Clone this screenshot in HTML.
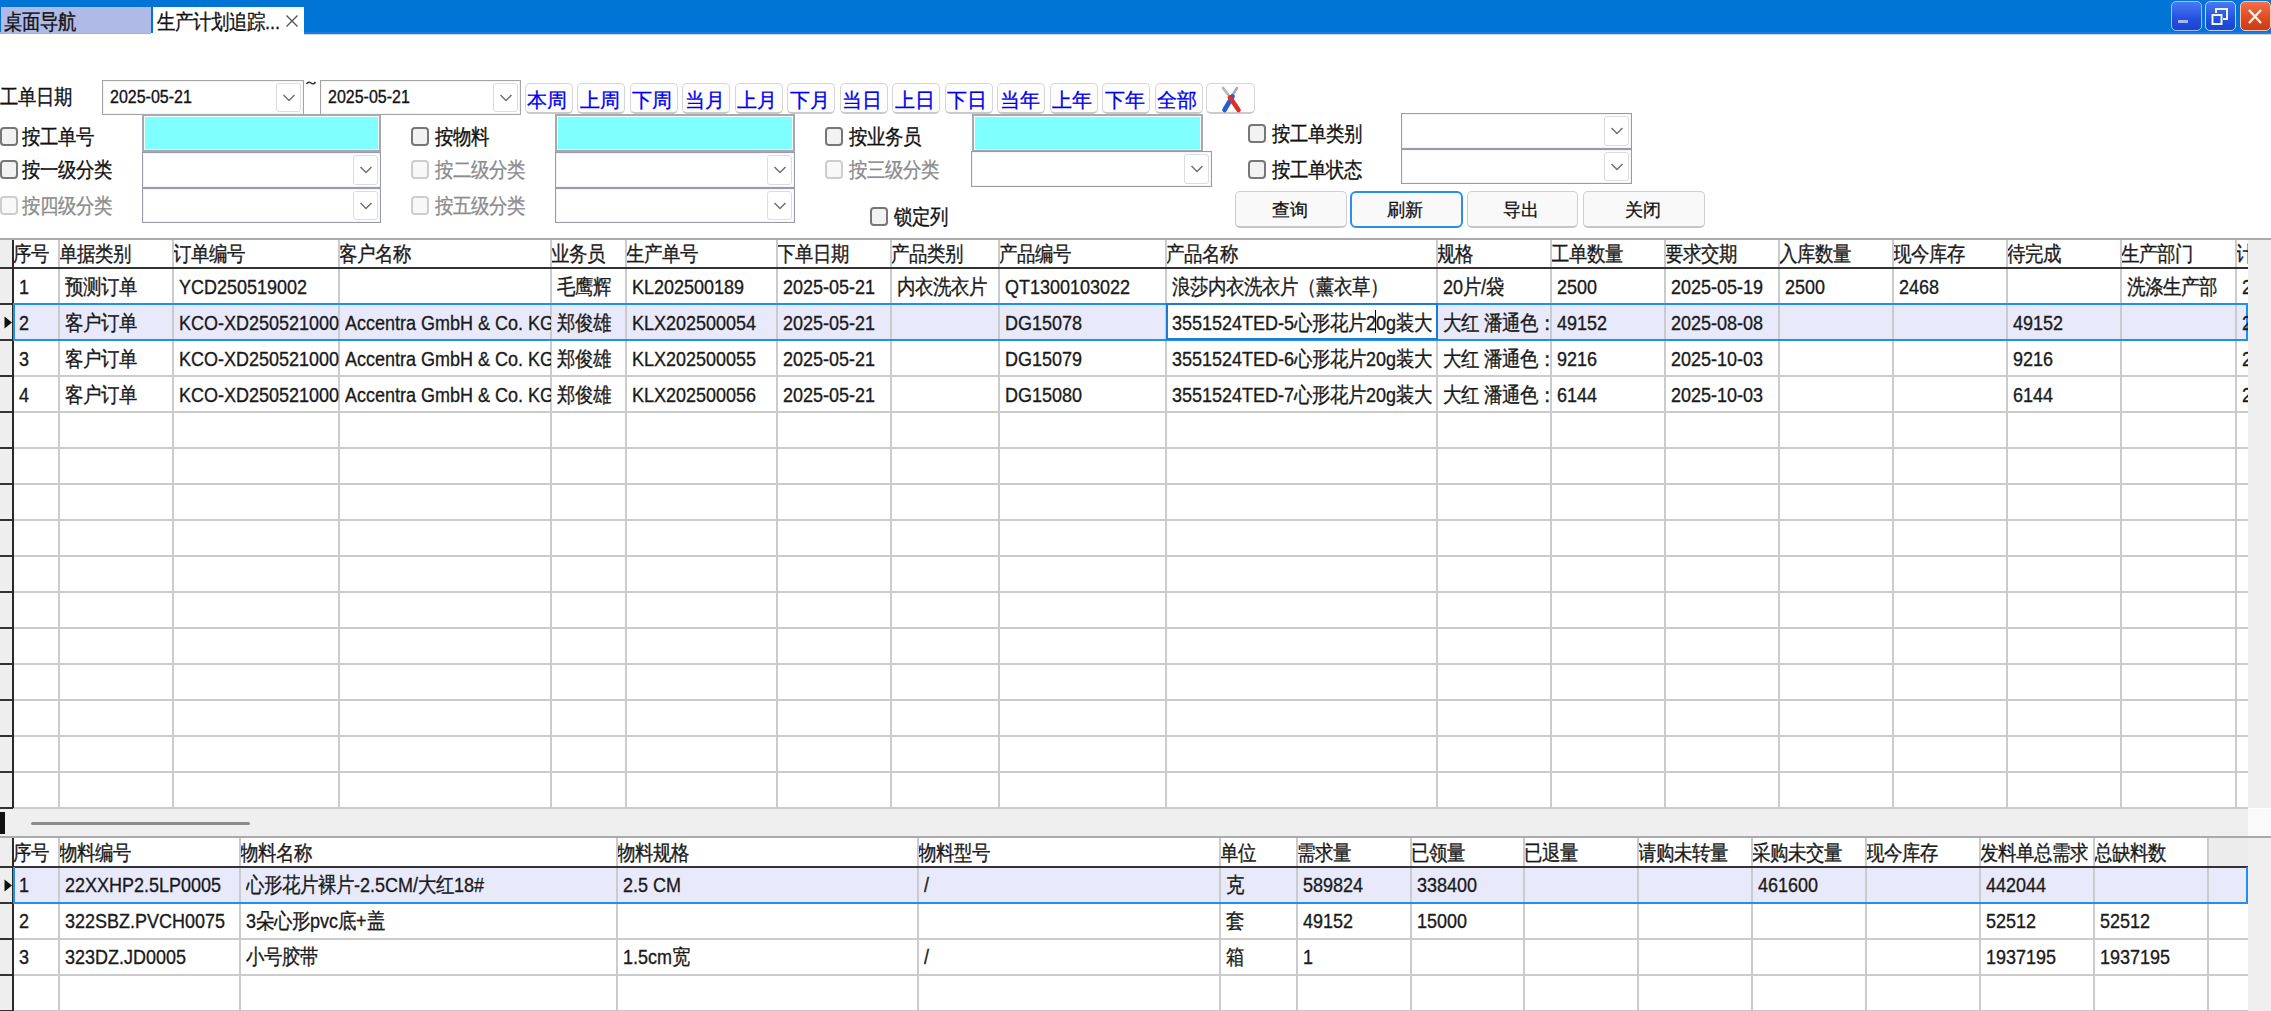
<!DOCTYPE html><html><head><meta charset="utf-8"><style>
*{box-sizing:border-box;margin:0;padding:0}
html,body{width:2271px;height:1011px;overflow:hidden;background:#fff;font-family:'Liberation Sans',sans-serif;font-size:18px;color:#000}
.ab{position:absolute;white-space:nowrap}
.t{position:absolute;white-space:nowrap;line-height:20px;-webkit-text-stroke:0.3px currentColor;transform:scaleY(1.14);transform-origin:50% 55%}
.btn{position:absolute;border:1px solid #d6d6d6;border-bottom:2px solid #cacaca;border-radius:5px;background:#fdfdfd;color:#0000f0;text-align:center;line-height:31px;font-size:20px;-webkit-text-stroke:0.3px #0000f0}
.cb{position:absolute;width:18px;height:19px;border:2px solid #777;border-radius:4px;background:#f2f2f2}
.cbd{border-color:#cdcdcd;background:#f8f8f8}
.cyan{position:absolute;background:#80ffff;border:2px solid #a6aaae;box-shadow:inset 0 0 0 1px #f4fefe}
.combo{position:absolute;background:#fff;border:1px solid #9a9aae;box-shadow:inset 0 0 0 1px #f4f4f8}
.dd{position:absolute;top:2px;right:2px;width:25px;bottom:2px;border:1px solid #dcdcdc;border-radius:3px;background:#fff}
.dd svg{position:absolute;left:5px;top:50%;margin-top:-5px}
.gl{position:absolute;background:#cbcbcb}
.abtn{position:absolute;border:1px solid #cfcfcf;border-bottom:2px solid #c6c6c6;border-radius:5px;background:#f9f9f9;text-align:center;line-height:36px;padding-right:3px;color:#111;-webkit-text-stroke:0.3px #111}
</style></head><body>

<div class="ab" style="left:0;top:0;width:2271px;height:33px;background:#0075d6"></div>
<div class="ab" style="left:304px;top:32px;width:1967px;height:1px;background:#0a7ef0"></div>
<div class="ab" style="left:304px;top:33px;width:1967px;height:1px;background:#7a6a60"></div>
<div class="ab" style="left:304px;top:34px;width:1967px;height:1px;background:#d8cfc8"></div>
<div class="ab" style="left:0;top:32px;width:151px;height:2px;background:#a6aed8"></div>
<div class="ab" style="left:1px;top:7px;width:150px;height:26px;background:#b0bae6"></div>
<div class="t" style="left:4px;top:12px;color:#111">桌面导航</div>
<div class="ab" style="left:153px;top:7px;width:151px;height:27px;background:#fff"></div>
<div class="t" style="left:157px;top:12px;color:#111">生产计划追踪...</div>
<svg class="ab" style="left:285px;top:14px" width="14" height="14"><path d="M1.5 1.5L12.5 12.5M12.5 1.5L1.5 12.5" stroke="#555" stroke-width="1.4"/></svg>
<div class="ab" style="left:2171px;top:1px;width:31px;height:30px;border-radius:5px;background:linear-gradient(#4a7af2,#2350e0 60%,#1a44d0);border:1.5px solid #9cc0ff"></div>
<div class="ab" style="left:2178px;top:20px;width:10px;height:3px;background:#a8b4f4"></div>
<div class="ab" style="left:2205px;top:1px;width:31px;height:30px;border-radius:5px;background:linear-gradient(#4a7af2,#2350e0 60%,#1a44d0);border:1.5px solid #b8d4ff"></div>
<svg class="ab" style="left:2210px;top:6px" width="20" height="20"><rect x="2.5" y="9" width="9" height="9" fill="none" stroke="#eef4e0" stroke-width="2"/><path d="M6 7V3H17V13H13" fill="none" stroke="#eef4e0" stroke-width="2"/></svg>
<div class="ab" style="left:2240px;top:1px;width:31px;height:30px;border-radius:5px;background:linear-gradient(#f27048,#dc4a20 60%,#c83c18);border:1.5px solid #f8c8b8"></div>
<svg class="ab" style="left:2244px;top:6px" width="22" height="20"><path d="M5 4L17 17M17 4L5 17" stroke="#f4f4e4" stroke-width="2.4"/></svg>
<div class="t" style="left:0;top:87px;color:#111">工单日期</div>
<div class="combo" style="left:102px;top:80px;width:202px;height:35px;border-color:#a4a4a4"><div class="dd"><svg width="14" height="10"><path d="M1.5 2L7 7.5L12.5 2" fill="none" stroke="#707070" stroke-width="1.5"/></svg></div></div>
<div class="t" style="left:110px;top:87px;font-size:16px;color:#111">2025-05-21</div>
<div class="combo" style="left:320px;top:80px;width:201px;height:35px;border-color:#a4a4a4"><div class="dd"><svg width="14" height="10"><path d="M1.5 2L7 7.5L12.5 2" fill="none" stroke="#707070" stroke-width="1.5"/></svg></div></div>
<div class="t" style="left:328px;top:87px;font-size:16px;color:#111">2025-05-21</div>
<svg class="ab" style="left:304px;top:78px" width="14" height="10"><path d="M2.5 6Q4.5 3 7 5Q9.5 7 11.5 4" fill="none" stroke="#333" stroke-width="1.6"/></svg>
<div class="btn" style="left:524.5px;top:83px;width:48px;height:31px;padding:1px 3px 0 0">本周</div>
<div class="btn" style="left:577.0px;top:83px;width:48px;height:31px;padding:1px 3px 0 0">上周</div>
<div class="btn" style="left:629.5px;top:83px;width:48px;height:31px;padding:1px 3px 0 0">下周</div>
<div class="btn" style="left:682.0px;top:83px;width:48px;height:31px;padding:1px 3px 0 0">当月</div>
<div class="btn" style="left:734.5px;top:83px;width:48px;height:31px;padding:1px 3px 0 0">上月</div>
<div class="btn" style="left:787.0px;top:83px;width:48px;height:31px;padding:1px 3px 0 0">下月</div>
<div class="btn" style="left:839.5px;top:83px;width:48px;height:31px;padding:1px 3px 0 0">当日</div>
<div class="btn" style="left:892.0px;top:83px;width:48px;height:31px;padding:1px 3px 0 0">上日</div>
<div class="btn" style="left:944.5px;top:83px;width:48px;height:31px;padding:1px 3px 0 0">下日</div>
<div class="btn" style="left:997.0px;top:83px;width:48px;height:31px;padding:1px 3px 0 0">当年</div>
<div class="btn" style="left:1049.5px;top:83px;width:48px;height:31px;padding:1px 3px 0 0">上年</div>
<div class="btn" style="left:1102.0px;top:83px;width:48px;height:31px;padding:1px 3px 0 0">下年</div>
<div class="btn" style="left:1154.5px;top:83px;width:48px;height:31px;padding:1px 3px 0 0">全部</div>
<div class="btn" style="left:1206px;top:83px;width:49px;height:31px"></div>
<svg class="ab" style="left:1206px;top:83px" width="49" height="31"><path d="M17 5L24 14" stroke="#b4b4b4" stroke-width="2.6" stroke-linecap="round"/><path d="M31 5L26 13" stroke="#a8aab4" stroke-width="2.6" stroke-linecap="round"/><path d="M26.5 13.5L18.5 27" stroke="#1f5fd0" stroke-width="4.6" stroke-linecap="round"/><path d="M24 14.5L32.5 27" stroke="#dc2f2a" stroke-width="4.6" stroke-linecap="round"/></svg>
<div class="cb" style="left:0px;top:127px"></div>
<div class="t" style="left:22px;top:127px;color:#111">按工单号</div>
<div class="cyan" style="left:142px;top:114px;width:239px;height:38px"></div>
<div class="cb" style="left:411px;top:127px"></div>
<div class="t" style="left:435px;top:127px;color:#111">按物料</div>
<div class="cyan" style="left:555px;top:114px;width:240px;height:38px"></div>
<div class="cb" style="left:825px;top:127px"></div>
<div class="t" style="left:849px;top:127px;color:#111">按业务员</div>
<div class="cyan" style="left:972px;top:114px;width:231px;height:38px"></div>
<div class="cb" style="left:1248px;top:124px"></div>
<div class="t" style="left:1272px;top:124px;color:#111">按工单类别</div>
<div class="combo" style="left:1401px;top:113px;width:231px;height:36px"><div class="dd"><svg width="14" height="10"><path d="M1.5 2L7 7.5L12.5 2" fill="none" stroke="#707070" stroke-width="1.5"/></svg></div></div>
<div class="cb" style="left:1248px;top:160px"></div>
<div class="t" style="left:1272px;top:160px;color:#111">按工单状态</div>
<div class="combo" style="left:1401px;top:149px;width:231px;height:35px"><div class="dd"><svg width="14" height="10"><path d="M1.5 2L7 7.5L12.5 2" fill="none" stroke="#707070" stroke-width="1.5"/></svg></div></div>
<div class="cb" style="left:0px;top:160px"></div>
<div class="t" style="left:22px;top:160px;color:#111">按一级分类</div>
<div class="combo" style="left:142px;top:152px;width:239px;height:36px"><div class="dd"><svg width="14" height="10"><path d="M1.5 2L7 7.5L12.5 2" fill="none" stroke="#707070" stroke-width="1.5"/></svg></div></div>
<div class="cb cbd" style="left:411px;top:160px"></div>
<div class="t" style="left:435px;top:160px;color:#8c8c8c">按二级分类</div>
<div class="combo" style="left:555px;top:152px;width:240px;height:36px"><div class="dd"><svg width="14" height="10"><path d="M1.5 2L7 7.5L12.5 2" fill="none" stroke="#707070" stroke-width="1.5"/></svg></div></div>
<div class="cb cbd" style="left:825px;top:160px"></div>
<div class="t" style="left:849px;top:160px;color:#8c8c8c">按三级分类</div>
<div class="combo" style="left:971px;top:151px;width:241px;height:36px"><div class="dd"><svg width="14" height="10"><path d="M1.5 2L7 7.5L12.5 2" fill="none" stroke="#707070" stroke-width="1.5"/></svg></div></div>
<div class="cb cbd" style="left:0px;top:196px"></div>
<div class="t" style="left:22px;top:196px;color:#8c8c8c">按四级分类</div>
<div class="combo" style="left:142px;top:188px;width:239px;height:35px"><div class="dd"><svg width="14" height="10"><path d="M1.5 2L7 7.5L12.5 2" fill="none" stroke="#707070" stroke-width="1.5"/></svg></div></div>
<div class="cb cbd" style="left:411px;top:196px"></div>
<div class="t" style="left:435px;top:196px;color:#8c8c8c">按五级分类</div>
<div class="combo" style="left:555px;top:188px;width:240px;height:35px"><div class="dd"><svg width="14" height="10"><path d="M1.5 2L7 7.5L12.5 2" fill="none" stroke="#707070" stroke-width="1.5"/></svg></div></div>
<div class="cb" style="left:870px;top:207px"></div>
<div class="t" style="left:894px;top:207px;color:#111">锁定列</div>
<div class="abtn" style="left:1235px;top:191px;width:112px;height:37px;">查询</div>
<div class="abtn" style="left:1350px;top:191px;width:113px;height:37px;border:2px solid #2a8ef0;line-height:34px;border-radius:6px;">刷新</div>
<div class="abtn" style="left:1467px;top:191px;width:111px;height:37px;">导出</div>
<div class="abtn" style="left:1583px;top:191px;width:122px;height:37px;">关闭</div>
<div class="ab" style="left:0;top:238px;width:2271px;height:2px;background:#a9a9ae"></div>
<div class="ab" style="left:2248px;top:240px;width:23px;height:568px;background:#efefef"></div>
<div class="ab" style="left:0;top:240px;width:12px;height:568px;background:#eeeeee"></div>
<div class="t" style="left:13px;top:244px;width:46px;overflow:hidden;color:#1a1a1a">序号</div>
<div class="t" style="left:59px;top:244px;width:114px;overflow:hidden;color:#1a1a1a">单据类别</div>
<div class="t" style="left:173px;top:244px;width:166px;overflow:hidden;color:#1a1a1a">订单编号</div>
<div class="t" style="left:339px;top:244px;width:212px;overflow:hidden;color:#1a1a1a">客户名称</div>
<div class="t" style="left:551px;top:244px;width:75px;overflow:hidden;color:#1a1a1a">业务员</div>
<div class="t" style="left:626px;top:244px;width:151px;overflow:hidden;color:#1a1a1a">生产单号</div>
<div class="t" style="left:777px;top:244px;width:114px;overflow:hidden;color:#1a1a1a">下单日期</div>
<div class="t" style="left:891px;top:244px;width:108px;overflow:hidden;color:#1a1a1a">产品类别</div>
<div class="t" style="left:999px;top:244px;width:167px;overflow:hidden;color:#1a1a1a">产品编号</div>
<div class="t" style="left:1166px;top:244px;width:271px;overflow:hidden;color:#1a1a1a">产品名称</div>
<div class="t" style="left:1437px;top:244px;width:114px;overflow:hidden;color:#1a1a1a">规格</div>
<div class="t" style="left:1551px;top:244px;width:114px;overflow:hidden;color:#1a1a1a">工单数量</div>
<div class="t" style="left:1665px;top:244px;width:114px;overflow:hidden;color:#1a1a1a">要求交期</div>
<div class="t" style="left:1779px;top:244px;width:114px;overflow:hidden;color:#1a1a1a">入库数量</div>
<div class="t" style="left:1893px;top:244px;width:114px;overflow:hidden;color:#1a1a1a">现今库存</div>
<div class="t" style="left:2007px;top:244px;width:114px;overflow:hidden;color:#1a1a1a">待完成</div>
<div class="t" style="left:2121px;top:244px;width:115px;overflow:hidden;color:#1a1a1a">生产部门</div>
<div class="t" style="left:2236px;top:244px;width:12px;overflow:hidden;color:#1a1a1a">计划</div>
<div class="gl" style="left:13px;top:303px;width:2235px;height:2px"></div>
<div class="ab" style="left:0;top:303px;width:13px;height:2px;background:#333"></div>
<div class="gl" style="left:13px;top:339px;width:2235px;height:2px"></div>
<div class="ab" style="left:0;top:339px;width:13px;height:2px;background:#333"></div>
<div class="gl" style="left:13px;top:375px;width:2235px;height:2px"></div>
<div class="ab" style="left:0;top:375px;width:13px;height:2px;background:#333"></div>
<div class="gl" style="left:13px;top:411px;width:2235px;height:2px"></div>
<div class="ab" style="left:0;top:411px;width:13px;height:2px;background:#333"></div>
<div class="gl" style="left:13px;top:447px;width:2235px;height:2px"></div>
<div class="ab" style="left:0;top:447px;width:13px;height:2px;background:#333"></div>
<div class="gl" style="left:13px;top:483px;width:2235px;height:2px"></div>
<div class="ab" style="left:0;top:483px;width:13px;height:2px;background:#333"></div>
<div class="gl" style="left:13px;top:519px;width:2235px;height:2px"></div>
<div class="ab" style="left:0;top:519px;width:13px;height:2px;background:#333"></div>
<div class="gl" style="left:13px;top:555px;width:2235px;height:2px"></div>
<div class="ab" style="left:0;top:555px;width:13px;height:2px;background:#333"></div>
<div class="gl" style="left:13px;top:591px;width:2235px;height:2px"></div>
<div class="ab" style="left:0;top:591px;width:13px;height:2px;background:#333"></div>
<div class="gl" style="left:13px;top:627px;width:2235px;height:2px"></div>
<div class="ab" style="left:0;top:627px;width:13px;height:2px;background:#333"></div>
<div class="gl" style="left:13px;top:663px;width:2235px;height:2px"></div>
<div class="ab" style="left:0;top:663px;width:13px;height:2px;background:#333"></div>
<div class="gl" style="left:13px;top:699px;width:2235px;height:2px"></div>
<div class="ab" style="left:0;top:699px;width:13px;height:2px;background:#333"></div>
<div class="gl" style="left:13px;top:735px;width:2235px;height:2px"></div>
<div class="ab" style="left:0;top:735px;width:13px;height:2px;background:#333"></div>
<div class="gl" style="left:13px;top:771px;width:2235px;height:2px"></div>
<div class="ab" style="left:0;top:771px;width:13px;height:2px;background:#333"></div>
<div class="gl" style="left:13px;top:807px;width:2235px;height:2px"></div>
<div class="ab" style="left:0;top:807px;width:13px;height:2px;background:#333"></div>
<div class="ab" style="left:13px;top:304px;width:2235px;height:36px;background:#e8eafb"></div>
<div class="gl" style="left:58px;top:240px;width:2px;height:568px"></div>
<div class="gl" style="left:172px;top:240px;width:2px;height:568px"></div>
<div class="gl" style="left:338px;top:240px;width:2px;height:568px"></div>
<div class="gl" style="left:550px;top:240px;width:2px;height:568px"></div>
<div class="gl" style="left:625px;top:240px;width:2px;height:568px"></div>
<div class="gl" style="left:776px;top:240px;width:2px;height:568px"></div>
<div class="gl" style="left:890px;top:240px;width:2px;height:568px"></div>
<div class="gl" style="left:998px;top:240px;width:2px;height:568px"></div>
<div class="gl" style="left:1165px;top:240px;width:2px;height:568px"></div>
<div class="gl" style="left:1436px;top:240px;width:2px;height:568px"></div>
<div class="gl" style="left:1550px;top:240px;width:2px;height:568px"></div>
<div class="gl" style="left:1664px;top:240px;width:2px;height:568px"></div>
<div class="gl" style="left:1778px;top:240px;width:2px;height:568px"></div>
<div class="gl" style="left:1892px;top:240px;width:2px;height:568px"></div>
<div class="gl" style="left:2006px;top:240px;width:2px;height:568px"></div>
<div class="gl" style="left:2120px;top:240px;width:2px;height:568px"></div>
<div class="gl" style="left:2235px;top:240px;width:2px;height:568px"></div>
<div class="ab" style="left:0;top:267px;width:2248px;height:2px;background:#333"></div>
<div class="ab" style="left:12px;top:240px;width:2px;height:568px;background:#2a2a2a"></div>
<div class="ab" style="left:13px;top:303px;width:2235px;height:38px;border:2px solid #2090f0;"></div>
<svg class="ab" style="left:4px;top:316px" width="9" height="13"><path d="M0.5 0.5L8 6.5L0.5 12.5Z" fill="#111"/></svg>
<div class="ab" style="left:1166px;top:303px;width:272px;height:37px;background:#fff;border:2px solid #1c7ad8"></div>
<div class="t" style="left:19px;top:277px;width:40px;overflow:hidden;color:#1a1a1a">1</div>
<div class="t" style="left:65px;top:277px;width:108px;overflow:hidden;color:#1a1a1a">预测订单</div>
<div class="t" style="left:179px;top:277px;width:160px;overflow:hidden;color:#1a1a1a">YCD250519002</div>
<div class="t" style="left:557px;top:277px;width:69px;overflow:hidden;color:#1a1a1a">毛鹰辉</div>
<div class="t" style="left:632px;top:277px;width:145px;overflow:hidden;color:#1a1a1a">KL202500189</div>
<div class="t" style="left:783px;top:277px;width:108px;overflow:hidden;color:#1a1a1a">2025-05-21</div>
<div class="t" style="left:897px;top:277px;width:102px;overflow:hidden;color:#1a1a1a">内衣洗衣片</div>
<div class="t" style="left:1005px;top:277px;width:161px;overflow:hidden;color:#1a1a1a">QT1300103022</div>
<div class="t" style="left:1172px;top:277px;width:265px;overflow:hidden;color:#1a1a1a">浪莎内衣洗衣片（薰衣草）</div>
<div class="t" style="left:1443px;top:277px;width:108px;overflow:hidden;color:#1a1a1a">20片/袋</div>
<div class="t" style="left:1557px;top:277px;width:108px;overflow:hidden;color:#1a1a1a">2500</div>
<div class="t" style="left:1671px;top:277px;width:108px;overflow:hidden;color:#1a1a1a">2025-05-19</div>
<div class="t" style="left:1785px;top:277px;width:108px;overflow:hidden;color:#1a1a1a">2500</div>
<div class="t" style="left:1899px;top:277px;width:108px;overflow:hidden;color:#1a1a1a">2468</div>
<div class="t" style="left:2127px;top:277px;width:109px;overflow:hidden;color:#1a1a1a">洗涤生产部</div>
<div class="t" style="left:2242px;top:277px;width:6px;overflow:hidden;color:#1a1a1a">2025</div>
<div class="t" style="left:19px;top:313px;width:40px;overflow:hidden;color:#1a1a1a">2</div>
<div class="t" style="left:65px;top:313px;width:108px;overflow:hidden;color:#1a1a1a">客户订单</div>
<div class="t" style="left:179px;top:313px;width:160px;overflow:hidden;color:#1a1a1a">KCO-XD2505210001</div>
<div class="t" style="left:345px;top:313px;width:206px;overflow:hidden;color:#1a1a1a">Accentra GmbH &amp; Co. KG</div>
<div class="t" style="left:557px;top:313px;width:69px;overflow:hidden;color:#1a1a1a">郑俊雄</div>
<div class="t" style="left:632px;top:313px;width:145px;overflow:hidden;color:#1a1a1a">KLX202500054</div>
<div class="t" style="left:783px;top:313px;width:108px;overflow:hidden;color:#1a1a1a">2025-05-21</div>
<div class="t" style="left:1005px;top:313px;width:161px;overflow:hidden;color:#1a1a1a">DG15078</div>
<div class="t" style="left:1172px;top:313px;width:265px;overflow:hidden;color:#1a1a1a">3551524TED-5心形花片20g装大</div>
<div class="t" style="left:1443px;top:313px;width:108px;overflow:hidden;color:#1a1a1a">大红 潘通色：</div>
<div class="t" style="left:1557px;top:313px;width:108px;overflow:hidden;color:#1a1a1a">49152</div>
<div class="t" style="left:1671px;top:313px;width:108px;overflow:hidden;color:#1a1a1a">2025-08-08</div>
<div class="t" style="left:2013px;top:313px;width:108px;overflow:hidden;color:#1a1a1a">49152</div>
<div class="t" style="left:2242px;top:313px;width:6px;overflow:hidden;color:#1a1a1a">2025</div>
<div class="t" style="left:19px;top:349px;width:40px;overflow:hidden;color:#1a1a1a">3</div>
<div class="t" style="left:65px;top:349px;width:108px;overflow:hidden;color:#1a1a1a">客户订单</div>
<div class="t" style="left:179px;top:349px;width:160px;overflow:hidden;color:#1a1a1a">KCO-XD2505210002</div>
<div class="t" style="left:345px;top:349px;width:206px;overflow:hidden;color:#1a1a1a">Accentra GmbH &amp; Co. KG</div>
<div class="t" style="left:557px;top:349px;width:69px;overflow:hidden;color:#1a1a1a">郑俊雄</div>
<div class="t" style="left:632px;top:349px;width:145px;overflow:hidden;color:#1a1a1a">KLX202500055</div>
<div class="t" style="left:783px;top:349px;width:108px;overflow:hidden;color:#1a1a1a">2025-05-21</div>
<div class="t" style="left:1005px;top:349px;width:161px;overflow:hidden;color:#1a1a1a">DG15079</div>
<div class="t" style="left:1172px;top:349px;width:265px;overflow:hidden;color:#1a1a1a">3551524TED-6心形花片20g装大</div>
<div class="t" style="left:1443px;top:349px;width:108px;overflow:hidden;color:#1a1a1a">大红 潘通色：</div>
<div class="t" style="left:1557px;top:349px;width:108px;overflow:hidden;color:#1a1a1a">9216</div>
<div class="t" style="left:1671px;top:349px;width:108px;overflow:hidden;color:#1a1a1a">2025-10-03</div>
<div class="t" style="left:2013px;top:349px;width:108px;overflow:hidden;color:#1a1a1a">9216</div>
<div class="t" style="left:2242px;top:349px;width:6px;overflow:hidden;color:#1a1a1a">2025</div>
<div class="t" style="left:19px;top:385px;width:40px;overflow:hidden;color:#1a1a1a">4</div>
<div class="t" style="left:65px;top:385px;width:108px;overflow:hidden;color:#1a1a1a">客户订单</div>
<div class="t" style="left:179px;top:385px;width:160px;overflow:hidden;color:#1a1a1a">KCO-XD2505210003</div>
<div class="t" style="left:345px;top:385px;width:206px;overflow:hidden;color:#1a1a1a">Accentra GmbH &amp; Co. KG</div>
<div class="t" style="left:557px;top:385px;width:69px;overflow:hidden;color:#1a1a1a">郑俊雄</div>
<div class="t" style="left:632px;top:385px;width:145px;overflow:hidden;color:#1a1a1a">KLX202500056</div>
<div class="t" style="left:783px;top:385px;width:108px;overflow:hidden;color:#1a1a1a">2025-05-21</div>
<div class="t" style="left:1005px;top:385px;width:161px;overflow:hidden;color:#1a1a1a">DG15080</div>
<div class="t" style="left:1172px;top:385px;width:265px;overflow:hidden;color:#1a1a1a">3551524TED-7心形花片20g装大</div>
<div class="t" style="left:1443px;top:385px;width:108px;overflow:hidden;color:#1a1a1a">大红 潘通色：</div>
<div class="t" style="left:1557px;top:385px;width:108px;overflow:hidden;color:#1a1a1a">6144</div>
<div class="t" style="left:1671px;top:385px;width:108px;overflow:hidden;color:#1a1a1a">2025-10-03</div>
<div class="t" style="left:2013px;top:385px;width:108px;overflow:hidden;color:#1a1a1a">6144</div>
<div class="t" style="left:2242px;top:385px;width:6px;overflow:hidden;color:#1a1a1a">2025</div>
<div class="ab" style="left:1375px;top:310px;width:1px;height:23px;background:#000"></div>
<div class="ab" style="left:0;top:809px;width:2248px;height:28px;background:#efefef"></div>
<div class="ab" style="left:2248px;top:809px;width:23px;height:28px;background:#fafafa"></div>
<div class="ab" style="left:31px;top:822px;width:219px;height:3px;background:#8a8a8a;border-radius:2px"></div>
<div class="ab" style="left:0;top:812px;width:5px;height:22px;background:#111"></div>
<div class="ab" style="left:0;top:836px;width:2271px;height:2px;background:#a9a9ae"></div>
<div class="ab" style="left:2248px;top:838px;width:23px;height:173px;background:#efefef"></div>
<div class="ab" style="left:0;top:838px;width:12px;height:173px;background:#eeeeee"></div>
<div class="ab" style="left:2208px;top:838px;width:40px;height:28px;background:#ececec"></div>
<div class="t" style="left:13px;top:843px;width:46px;overflow:hidden;color:#1a1a1a">序号</div>
<div class="t" style="left:59px;top:843px;width:181px;overflow:hidden;color:#1a1a1a">物料编号</div>
<div class="t" style="left:240px;top:843px;width:377px;overflow:hidden;color:#1a1a1a">物料名称</div>
<div class="t" style="left:617px;top:843px;width:301px;overflow:hidden;color:#1a1a1a">物料规格</div>
<div class="t" style="left:918px;top:843px;width:302px;overflow:hidden;color:#1a1a1a">物料型号</div>
<div class="t" style="left:1220px;top:843px;width:77px;overflow:hidden;color:#1a1a1a">单位</div>
<div class="t" style="left:1297px;top:843px;width:114px;overflow:hidden;color:#1a1a1a">需求量</div>
<div class="t" style="left:1411px;top:843px;width:113px;overflow:hidden;color:#1a1a1a">已领量</div>
<div class="t" style="left:1524px;top:843px;width:114px;overflow:hidden;color:#1a1a1a">已退量</div>
<div class="t" style="left:1638px;top:843px;width:114px;overflow:hidden;color:#1a1a1a">请购未转量</div>
<div class="t" style="left:1752px;top:843px;width:114px;overflow:hidden;color:#1a1a1a">采购未交量</div>
<div class="t" style="left:1866px;top:843px;width:114px;overflow:hidden;color:#1a1a1a">现今库存</div>
<div class="t" style="left:1980px;top:843px;width:114px;overflow:hidden;color:#1a1a1a">发料单总需求</div>
<div class="t" style="left:2094px;top:843px;width:114px;overflow:hidden;color:#1a1a1a">总缺料数</div>
<div class="gl" style="left:13px;top:902px;width:2235px;height:2px"></div>
<div class="ab" style="left:0;top:902px;width:13px;height:2px;background:#333"></div>
<div class="gl" style="left:13px;top:938px;width:2235px;height:2px"></div>
<div class="ab" style="left:0;top:938px;width:13px;height:2px;background:#333"></div>
<div class="gl" style="left:13px;top:974px;width:2235px;height:2px"></div>
<div class="ab" style="left:0;top:974px;width:13px;height:2px;background:#333"></div>
<div class="gl" style="left:13px;top:1010px;width:2235px;height:2px"></div>
<div class="ab" style="left:0;top:1010px;width:13px;height:2px;background:#333"></div>
<div class="ab" style="left:13px;top:867px;width:2235px;height:36px;background:#e8eafb"></div>
<div class="gl" style="left:58px;top:838px;width:2px;height:173px"></div>
<div class="gl" style="left:239px;top:838px;width:2px;height:173px"></div>
<div class="gl" style="left:616px;top:838px;width:2px;height:173px"></div>
<div class="gl" style="left:917px;top:838px;width:2px;height:173px"></div>
<div class="gl" style="left:1219px;top:838px;width:2px;height:173px"></div>
<div class="gl" style="left:1296px;top:838px;width:2px;height:173px"></div>
<div class="gl" style="left:1410px;top:838px;width:2px;height:173px"></div>
<div class="gl" style="left:1523px;top:838px;width:2px;height:173px"></div>
<div class="gl" style="left:1637px;top:838px;width:2px;height:173px"></div>
<div class="gl" style="left:1751px;top:838px;width:2px;height:173px"></div>
<div class="gl" style="left:1865px;top:838px;width:2px;height:173px"></div>
<div class="gl" style="left:1979px;top:838px;width:2px;height:173px"></div>
<div class="gl" style="left:2093px;top:838px;width:2px;height:173px"></div>
<div class="gl" style="left:2207px;top:838px;width:2px;height:173px"></div>
<div class="ab" style="left:0;top:866px;width:2248px;height:2px;background:#333"></div>
<div class="ab" style="left:12px;top:838px;width:2px;height:173px;background:#2a2a2a"></div>
<div class="ab" style="left:13px;top:867px;width:2235px;height:37px;border:2px solid #2090f0;border-top:none;"></div>
<svg class="ab" style="left:4px;top:879px" width="9" height="13"><path d="M0.5 0.5L8 6.5L0.5 12.5Z" fill="#111"/></svg>
<div class="t" style="left:19px;top:875px;width:40px;overflow:hidden;color:#1a1a1a">1</div>
<div class="t" style="left:65px;top:875px;width:175px;overflow:hidden;color:#1a1a1a">22XXHP2.5LP0005</div>
<div class="t" style="left:246px;top:875px;width:371px;overflow:hidden;color:#1a1a1a">心形花片裸片-2.5CM/大红18#</div>
<div class="t" style="left:623px;top:875px;width:295px;overflow:hidden;color:#1a1a1a">2.5 CM</div>
<div class="t" style="left:924px;top:875px;width:296px;overflow:hidden;color:#1a1a1a">/</div>
<div class="t" style="left:1226px;top:875px;width:71px;overflow:hidden;color:#1a1a1a">克</div>
<div class="t" style="left:1303px;top:875px;width:108px;overflow:hidden;color:#1a1a1a">589824</div>
<div class="t" style="left:1417px;top:875px;width:107px;overflow:hidden;color:#1a1a1a">338400</div>
<div class="t" style="left:1758px;top:875px;width:108px;overflow:hidden;color:#1a1a1a">461600</div>
<div class="t" style="left:1986px;top:875px;width:108px;overflow:hidden;color:#1a1a1a">442044</div>
<div class="t" style="left:19px;top:911px;width:40px;overflow:hidden;color:#1a1a1a">2</div>
<div class="t" style="left:65px;top:911px;width:175px;overflow:hidden;color:#1a1a1a">322SBZ.PVCH0075</div>
<div class="t" style="left:246px;top:911px;width:371px;overflow:hidden;color:#1a1a1a">3朵心形pvc底+盖</div>
<div class="t" style="left:1226px;top:911px;width:71px;overflow:hidden;color:#1a1a1a">套</div>
<div class="t" style="left:1303px;top:911px;width:108px;overflow:hidden;color:#1a1a1a">49152</div>
<div class="t" style="left:1417px;top:911px;width:107px;overflow:hidden;color:#1a1a1a">15000</div>
<div class="t" style="left:1986px;top:911px;width:108px;overflow:hidden;color:#1a1a1a">52512</div>
<div class="t" style="left:2100px;top:911px;width:108px;overflow:hidden;color:#1a1a1a">52512</div>
<div class="t" style="left:19px;top:947px;width:40px;overflow:hidden;color:#1a1a1a">3</div>
<div class="t" style="left:65px;top:947px;width:175px;overflow:hidden;color:#1a1a1a">323DZ.JD0005</div>
<div class="t" style="left:246px;top:947px;width:371px;overflow:hidden;color:#1a1a1a">小号胶带</div>
<div class="t" style="left:623px;top:947px;width:295px;overflow:hidden;color:#1a1a1a">1.5cm宽</div>
<div class="t" style="left:924px;top:947px;width:296px;overflow:hidden;color:#1a1a1a">/</div>
<div class="t" style="left:1226px;top:947px;width:71px;overflow:hidden;color:#1a1a1a">箱</div>
<div class="t" style="left:1303px;top:947px;width:108px;overflow:hidden;color:#1a1a1a">1</div>
<div class="t" style="left:1986px;top:947px;width:108px;overflow:hidden;color:#1a1a1a">1937195</div>
<div class="t" style="left:2100px;top:947px;width:108px;overflow:hidden;color:#1a1a1a">1937195</div>
</body></html>
